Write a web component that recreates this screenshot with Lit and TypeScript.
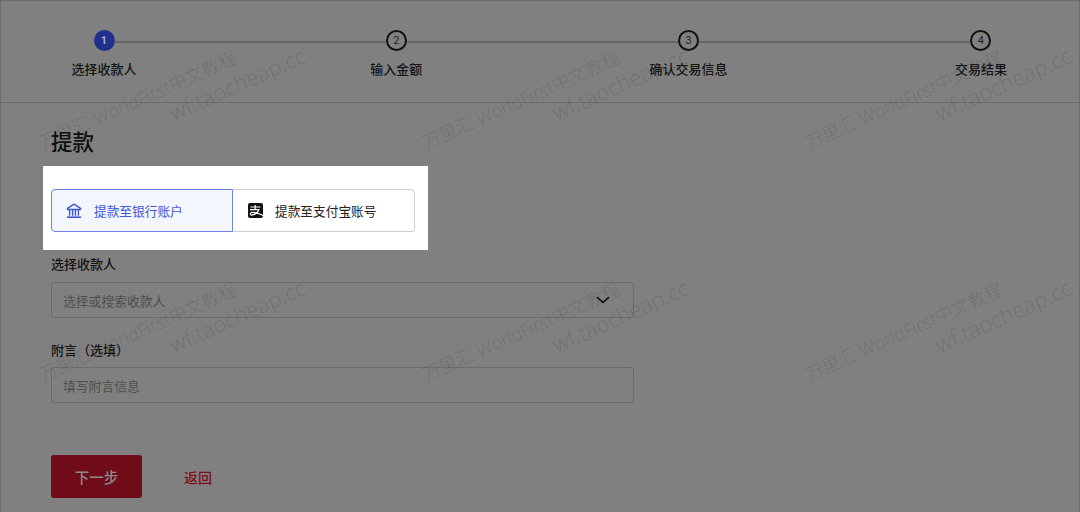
import { LitElement, html, css } from "lit";
import { customElement } from "lit/decorators.js";

const steps = ["选择收款人", "输入金额", "确认交易信息", "交易结果"];
const colsCn = [44, 427, 810];
const colsWf = [174, 557, 940];
const rowsCn = [153, 385];
const rowsWf = [123, 355];

@customElement("app-root")
export class AppRoot extends LitElement {
  static styles = css`
    :host {
      display: block;
      position: relative;
      width: 1080px;
      height: 512px;
      box-sizing: border-box;
      overflow: hidden;
      background: #808080;
      border: 1px solid #6a6a6a;
      border-bottom: 0;
      font-family: "Noto Sans CJK SC", "Noto Sans", sans-serif;
      color: #111;
    }
    .stepper {
      display: grid;
      grid-template-columns: repeat(4, 120px);
      column-gap: 172.3px;
      height: 102px;
      box-sizing: border-box;
      padding: 29px 0 0 43px;
      border-bottom: 1px solid #6b6b6b;
    }
    .step {
      position: relative;
      display: flex;
      flex-direction: column;
      align-items: center;
      gap: 9px;
    }
    .step:not(:last-child)::after {
      content: "";
      position: absolute;
      left: 70.5px;
      top: 11px;
      width: 271px;
      height: 2px;
      background: #666;
    }
    .num {
      box-sizing: border-box;
      width: 21px;
      height: 21px;
      border-radius: 50%;
      border: 2px solid #111;
      display: flex;
      align-items: center;
      justify-content: center;
      font-size: 11px;
      line-height: 1;
      color: #222;
      font-family: "Roboto", sans-serif;
    }
    .num.active {
      background: #20308c;
      border-color: #20308c;
      color: #a9aed0;
      font-weight: 700;
    }
    .step-label {
      font-size: 13px;
      line-height: 18px;
      font-weight: 500;
      color: #141414;
      white-space: nowrap;
    }
    .content {
      padding: 23px 0 0 50px;
    }
    h1 {
      margin: 0;
      font-size: 21.5px;
      line-height: 30px;
      font-weight: 500;
      color: #0e0e0e;
    }
    .spot {
      width: 385px;
      height: 84px;
      box-sizing: border-box;
      margin: 10px 0 0 -8px;
      padding: 23px 13px 18px 8px;
      background: #fff;
      position: relative;
      z-index: 2;
    }
    .tabs {
      display: flex;
      width: 364px;
      height: 43px;
    }
    .tab {
      display: flex;
      align-items: center;
      box-sizing: border-box;
      font-size: 12.7px;
      white-space: nowrap;
      height: 100%;
    }
    .tab.on {
      width: 182px;
      padding-left: 14px;
      gap: 12px;
      background: #f3f6ff;
      border: 1px solid #6d80ea;
      border-radius: 4px 0 0 4px;
      color: #4259d8;
    }
    .tab.off {
      flex: 1;
      padding-left: 15px;
      gap: 12px;
      border: 1px solid #cfcfcf;
      border-left: 0;
      border-radius: 0 4px 4px 0;
      color: #222;
    }
    .field-label {
      font-size: 13px;
      line-height: 18px;
      font-weight: 500;
      color: #141414;
    }
    .f1 { margin-top: 5px; }
    .f2 { margin-top: 23px; }
    .box {
      display: flex;
      align-items: center;
      justify-content: space-between;
      box-sizing: border-box;
      width: 583px;
      height: 36px;
      margin-top: 9px;
      padding: 0 23px 0 11px;
      border: 1px solid #6c6c6c;
      border-radius: 3px;
      font-size: 12.8px;
      color: #4f4f4f;
    }
    .f2 + .box { margin-top: 8px; }
    .actions {
      display: flex;
      align-items: center;
      margin-top: 52px;
      gap: 42px;
    }
    .next {
      width: 91px;
      height: 43px;
      border-radius: 3px;
      background: #700c1a;
      color: #8b8b8b;
      display: flex;
      align-items: center;
      justify-content: center;
      font-size: 14.5px;
      font-weight: 500;
    }
    .back {
      font-size: 14px;
      font-weight: 500;
      color: #7c0e22;
    }
    .mark {
      position: absolute;
      transform-origin: 0 100%;
      transform: rotate(-24deg);
      line-height: 24px;
      font-weight: 300;
      white-space: nowrap;
      color: rgba(50, 50, 50, 0.2);
      pointer-events: none;
      font-family: "Open Sans", "Noto Sans CJK SC", sans-serif;
    }
    .cn { font-size: 18px; }
    .wf { font-size: 22px; }
  `;

  render() {
    return html`
      <div class="stepper">
        ${steps.map(
          (s, i) => html`<div class="step">
            <div class="num ${i === 0 ? "active" : ""}">${i + 1}</div>
            <div class="step-label">${s}</div>
          </div>`
        )}
      </div>
      <div class="content">
        <h1>提款</h1>
        <div class="spot">
          <div class="tabs">
            <div class="tab on">
              <svg width="16" height="16" viewBox="0 0 16 16" fill="none" stroke="#3f56d8" stroke-width="1.4">
                <path d="M1.5 5.4 8 1.2l6.5 4.2v1.1h-13z" stroke-linejoin="round" />
                <path d="M3.6 7v5.8M6.6 7v5.8M9.4 7v5.8M12.4 7v5.8" />
                <path d="M1 14.2h14" stroke-width="1.6" />
              </svg>
              <span>提款至银行账户</span>
            </div>
            <div class="tab off">
              <svg width="15" height="15" viewBox="0 0 15 15">
                <rect width="15" height="15" rx="2" fill="#111" />
                <path d="M2.5 4h10M2 6.6h9.5M7.2 2v4.6M10.8 6.6c-.8 3-3.4 5-7.4 5.6-1.6-.4-1.4-2.4.6-2.8 2.6-.5 6.4 1 11 3.1" fill="none" stroke="#fff" stroke-width="1.2" />
              </svg>
              <span>提款至支付宝账号</span>
            </div>
          </div>
        </div>
        <div class="field-label f1">选择收款人</div>
        <div class="box">
          <span>选择或搜索收款人</span>
          <svg width="14" height="8" viewBox="0 0 14 8" fill="none" stroke="#111" stroke-width="1.6">
            <path d="M1 1.2 7 6.4l6-5.2" />
          </svg>
        </div>
        <div class="field-label f2">附言（选填）</div>
        <div class="box"><span>填写附言信息</span></div>
        <div class="actions">
          <div class="next">下一步</div>
          <div class="back">返回</div>
        </div>
      </div>
      ${rowsCn.map((y) =>
        colsCn.map(
          (x) => html`<div class="mark cn" style="left:${x}px;top:${y - 24}px">万里汇 WorldFirst中文教程</div>`
        )
      )}
      ${rowsWf.map((y) =>
        colsWf.map(
          (x) => html`<div class="mark wf" style="left:${x}px;top:${y - 24}px">wf.taocheap.cc</div>`
        )
      )}
    `;
  }
}
